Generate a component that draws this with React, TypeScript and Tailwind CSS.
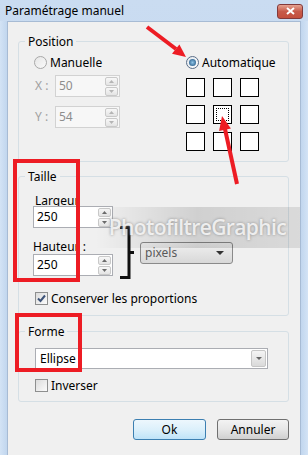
import React from 'react'

function Spin({ disabled }: { disabled?: boolean }) {
  const c = disabled ? '#b5b5b5' : '#6b6b6b'
  return (
    <div className="flex flex-col gap-[1px] w-[13px]">
      <div className="h-[9px] border border-[#c9c9c9] rounded-[2px] bg-linear-to-b from-[#f8f8f8] to-[#e4e4e4] flex items-center justify-center">
        <svg width="5" height="3"><path d="M0 3 L2.5 0 L5 3Z" fill={c} /></svg>
      </div>
      <div className="h-[9px] border border-[#c9c9c9] rounded-[2px] bg-linear-to-b from-[#f8f8f8] to-[#e4e4e4] flex items-center justify-center">
        <svg width="5" height="3"><path d="M0 0 L2.5 3 L5 0Z" fill={c} /></svg>
      </div>
    </div>
  )
}

function NumField({ value, disabled, w }: { value: string; disabled?: boolean; w: string }) {
  return (
    <div
      className={`${w} h-[22px] flex items-center justify-between pl-[3px] pr-[1px] border ${
        disabled ? 'border-[#d2d2d2] bg-[#f7f7f7] text-[#8d8d8d]' : 'border-[#abadb3] bg-white'
      }`}
    >
      <span>{value}</span>
      <Spin disabled={disabled} />
    </div>
  )
}

function Radio({ checked, disabled }: { checked?: boolean; disabled?: boolean }) {
  return (
    <div
      className={`w-[13px] h-[13px] rounded-full border flex items-center justify-center bg-linear-to-br ${
        disabled ? 'border-[#a8a8a8] from-[#e6e6e6] to-[#fafafa]' : 'border-[#5a6e88] from-[#e3e8ee] to-[#fdfdfd]'
      }`}
    >
      {checked && <div className="w-[7px] h-[7px] rounded-full bg-radial from-[#8fc4e6] to-[#174e7c]" />}
    </div>
  )
}

function Check({ checked }: { checked?: boolean }) {
  return (
    <div className="w-[13px] h-[13px] border border-[#8e8f8f] bg-linear-to-br from-[#dcdcdc] to-[#fbfbfb] flex items-center justify-center">
      {checked && (
        <svg width="9" height="9" viewBox="0 0 9 9">
          <path d="M1 4.5 L3.5 7 L8 1.5" stroke="#3d5378" strokeWidth="2" fill="none" />
        </svg>
      )}
    </div>
  )
}

function Legend({ children }: { children: React.ReactNode }) {
  return <legend className="ml-[6px] px-[3px] leading-[15px]">{children}</legend>
}

export default function App() {
  return (
    <div className="relative w-[308px] h-[455px] overflow-hidden bg-linear-to-b from-[#cadcf1] to-[#bdd2ea] font-['Noto_Sans',sans-serif] text-[12px] text-black">
      {/* title bar */}
      <div className="h-[21px] flex items-center justify-between pl-[5px] pr-[5px]">
        <span className="leading-[15px]">Paramétrage manuel</span>
        <div className="mt-[1px] w-[26px] h-[15px] rounded-[3px] border border-[#83393a] bg-linear-to-b from-[#e5a291] via-[#c75a4a] to-[#c44f3d] flex items-center justify-center">
          <svg width="9" height="8" viewBox="0 0 9 8">
            <path d="M1 1 L8 7 M8 1 L1 7" stroke="white" strokeWidth="2" />
          </svg>
        </div>
      </div>

      <div className="flex h-[434px]">
        <div className="w-[7px] bg-linear-to-r from-[#d3e3f5] to-[#c1d6ee]" />
        <div className="w-[293px] bg-[#f0f0f0] border-l border-t border-[#a7bbd4] pl-[10px] pt-[12px]">
          {/* Position */}
          <fieldset className="w-[271px] border border-[#d5dfe5] rounded-[3px] pb-[10px]">
            <Legend>Position</Legend>
            <div className="flex pl-[15px] pt-[6px]">
              <div className="w-[152px] flex flex-col">
                <div className="h-[15px] flex items-center gap-[3px]">
                  <Radio disabled />
                  <span>Manuelle</span>
                </div>
                <div className="mt-[5px] flex items-center text-[#a0a0a0]">
                  <span className="w-[21px] pl-[1px]">X :</span>
                  <NumField value="50" disabled w="w-[65px]" />
                </div>
                <div className="mt-[9px] flex items-center text-[#a0a0a0]">
                  <span className="w-[21px] pl-[1px]">Y :</span>
                  <NumField value="54" disabled w="w-[65px]" />
                </div>
              </div>
              <div className="flex flex-col">
                <div className="h-[15px] flex items-center gap-[3px]">
                  <Radio checked />
                  <span>Automatique</span>
                </div>
                <div className="mt-[8px] grid grid-cols-3 gap-[8px] w-[73px]">
                  {Array.from({ length: 9 }).map((_, i) => (
                    <div key={i} className="w-[19px] h-[19px] border border-black bg-white p-[2px]">
                      {i === 4 && <div className="w-full h-full border border-dotted border-black" />}
                    </div>
                  ))}
                </div>
              </div>
            </div>
          </fieldset>

          {/* Taille */}
          <fieldset className="mt-[7px] w-[271px] border border-[#d5dfe5] rounded-[3px] pb-[9px]">
            <Legend>Taille</Legend>
            <div className="flex items-start pl-[14px] pt-[12px]">
              <div className="flex flex-col">
                <span className="ml-[2px] leading-[10px] h-[10px]">Largeur</span>
                <NumField value="250" w="w-[80px]" />
                <span className="mt-[14px] leading-[10px] h-[10px]">Hauteur :</span>
                <div className="mt-[2px]">
                  <NumField value="250" w="w-[80px]" />
                </div>
              </div>
              <svg className="ml-[7px] mt-[30px]" width="14" height="53" viewBox="0 0 14 53">
                <path d="M0 1.5 H9 V51.5 H0 M9 26.5 H14" stroke="#111" strokeWidth="3" fill="none" />
              </svg>
              <div className="ml-[6px] mt-[46px] w-[93px] h-[22px] rounded-[3px] border border-[#8a8a8a] bg-linear-to-b from-[#f0f0f0] to-[#d8d8d8] flex items-center justify-between pl-[4px] pr-[8px] text-[#5a5a5a]">
                <span>pixels</span>
                <svg width="8" height="4"><path d="M0 0 L8 0 L4 4Z" fill="#333" /></svg>
              </div>
            </div>
            <div className="mt-[12px] h-[15px] pl-[16px] flex items-center gap-[3px]">
              <Check checked />
              <span>Conserver les proportions</span>
            </div>
          </fieldset>

          {/* Forme */}
          <fieldset className="mt-[8px] w-[271px] border border-[#d5dfe5] rounded-[3px] pb-[8px]">
            <Legend>Forme</Legend>
            <div className="pl-[16px] pt-[9px]">
              <div className="w-[233px] h-[21px] border border-[#abadb3] bg-white flex items-center justify-between pl-[4px] pr-[1px]">
                <span>Ellipse</span>
                <div className="w-[15px] h-[17px] border border-[#c6c6c6] rounded-[2px] bg-linear-to-b from-[#f4f4f4] to-[#dadada] flex items-center justify-center">
                  <svg width="6" height="3"><path d="M0 0 L6 0 L3 3Z" fill="#666" /></svg>
                </div>
              </div>
              <div className="mt-[9px] h-[15px] flex items-center gap-[3px]">
                <Check />
                <span>Inverser</span>
              </div>
            </div>
          </fieldset>

          {/* buttons */}
          <div className="mt-[17px] w-[271px] flex justify-end gap-[11px]">
            <button className="w-[73px] h-[21px] rounded-[3px] border border-[#3c7fb1] bg-linear-to-b from-[#edf7fd] via-[#dcf0fb] to-[#bfe3f8] leading-[15px]">
              Ok
            </button>
            <button className="w-[72px] h-[21px] rounded-[3px] border border-[#707070] bg-linear-to-b from-[#f3f3f3] via-[#e6e6e6] to-[#d0d0d0] leading-[15px]">
              Annuler
            </button>
          </div>
        </div>
        <div className="w-[8px] bg-linear-to-r from-[#c1d6ee] to-[#d3e3f5] border-l border-[#a7bbd4]" />
      </div>

      {/* watermark */}
      <div className="pointer-events-none absolute left-[95px] top-[207px] w-[205px] h-[41px] bg-linear-to-r from-transparent via-[#00000022] to-[#00000018] flex items-center justify-center">
        <span className="font-['Open_Sans',sans-serif] font-semibold text-[21px] tracking-[-0.6px] text-white/80 [text-shadow:0_0_3px_#8a8a8a]">
          PhotofiltreGraphic
        </span>
      </div>

      {/* annotations */}
      <svg className="pointer-events-none absolute inset-0" width="308" height="455">
        <rect x="15" y="161" width="63" height="119" stroke="#ed1c24" strokeWidth="4" fill="none" />
        <rect x="17" y="315" width="63" height="55" stroke="#ed1c24" strokeWidth="4" fill="none" />
        <line x1="147" y1="27" x2="176" y2="49" stroke="#ed1c24" strokeWidth="4" />
        <polygon points="186,57 172,53.8 179.4,44.4" fill="#ed1c24" />
        <line x1="237" y1="184" x2="225" y2="129" stroke="#ed1c24" strokeWidth="4" />
        <polygon points="222,116 230.9,128.4 219.1,131" fill="#ed1c24" />
      </svg>
    </div>
  )
}
